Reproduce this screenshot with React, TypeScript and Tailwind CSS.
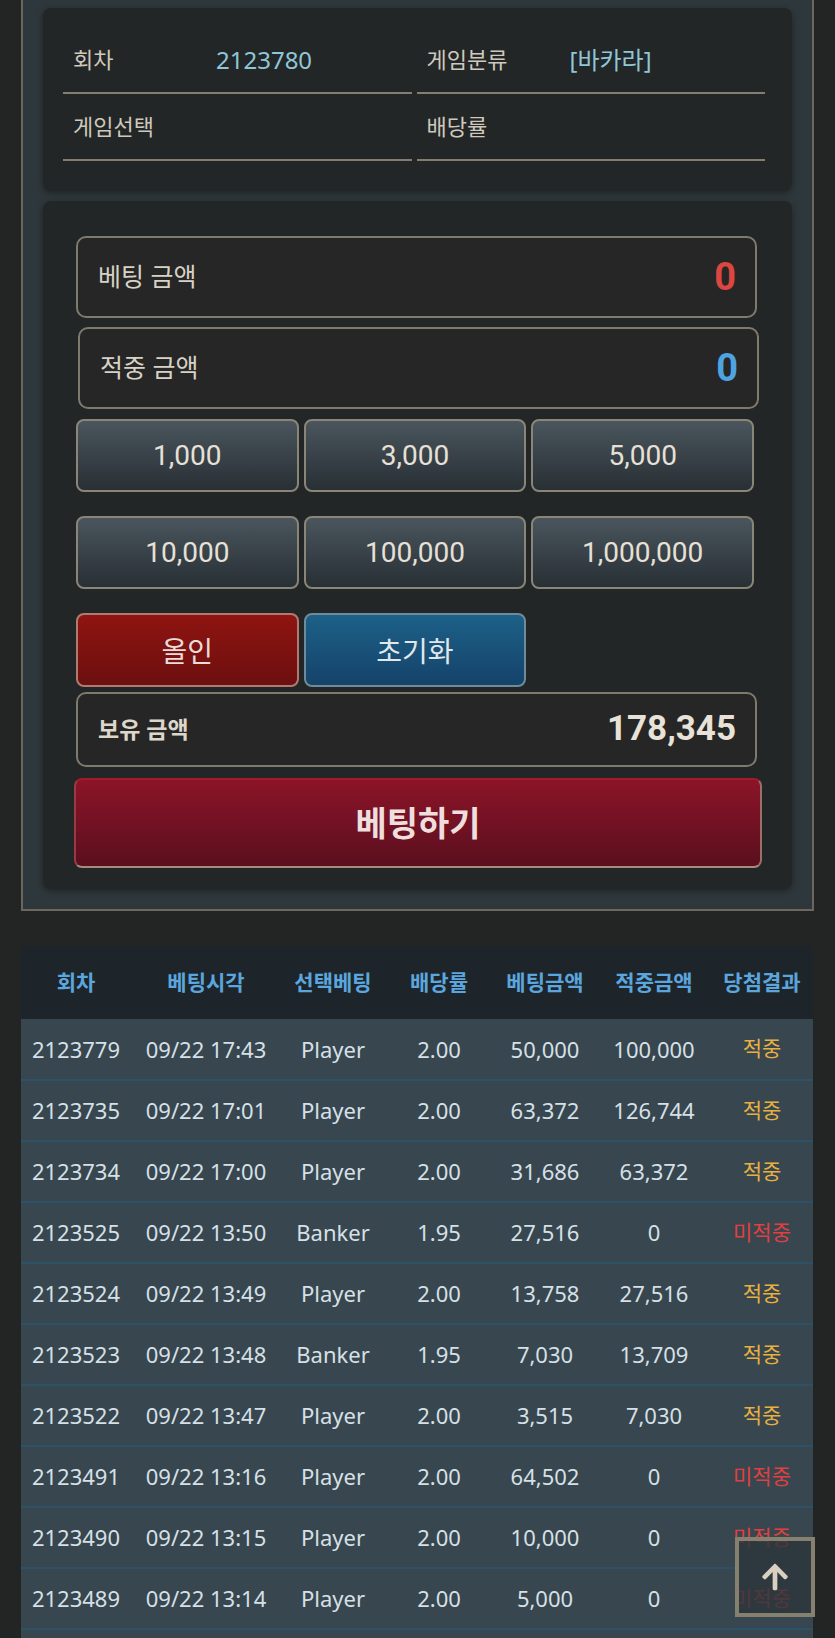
import { FaArrowUp } from "react-icons/fa";

const chips = ["1,000", "3,000", "5,000", "10,000", "100,000", "1,000,000"];

const rows = [
  ["2123779", "09/22 17:43", "Player", "2.00", "50,000", "100,000", "적중"],
  ["2123735", "09/22 17:01", "Player", "2.00", "63,372", "126,744", "적중"],
  ["2123734", "09/22 17:00", "Player", "2.00", "31,686", "63,372", "적중"],
  ["2123525", "09/22 13:50", "Banker", "1.95", "27,516", "0", "미적중"],
  ["2123524", "09/22 13:49", "Player", "2.00", "13,758", "27,516", "적중"],
  ["2123523", "09/22 13:48", "Banker", "1.95", "7,030", "13,709", "적중"],
  ["2123522", "09/22 13:47", "Player", "2.00", "3,515", "7,030", "적중"],
  ["2123491", "09/22 13:16", "Player", "2.00", "64,502", "0", "미적중"],
  ["2123490", "09/22 13:15", "Player", "2.00", "10,000", "0", "미적중"],
  ["2123489", "09/22 13:14", "Player", "2.00", "5,000", "0", "미적중"],
  ["2123488", "09/22 13:13", "Player", "2.00", "5,000", "0", "미적중"],
];

const headers = ["회차", "베팅시각", "선택베팅", "배당률", "베팅금액", "적중금액", "당첨결과"];
const colWidths = ["w-[110px]", "w-[150px]", "w-[104px]", "w-[108px]", "w-[104px]", "w-[114px]", "w-[102px]"];

function InfoCell({ label, value }: { label: string; value?: string }) {
  return (
    <div className="flex h-[67px] items-center border-b-2 border-[#857e70] pl-[10px]">
      <span className="w-[143px] text-[22px] text-[#cfc9bd]">{label}</span>
      {value && <span className="text-[24px] text-[#8fc6d8]">{value}</span>}
    </div>
  );
}

function AmountBox({ label, value, color, className = "" }: { label: string; value: string; color: string; className?: string }) {
  return (
    <div
      className={`flex h-[82px] items-center justify-between rounded-[10px] border-2 border-[#7f7a6e] bg-[#252625] pl-[20px] pr-[19px] ${className}`}
    >
      <span className="text-[25px] text-[#d8d2c6]">{label}</span>
      <span className={`font-['Roboto',sans-serif] text-[38px] font-bold ${color}`}>{value}</span>
    </div>
  );
}

export default function App() {
  return (
    <div className="min-h-screen bg-[#232525] pb-10 font-['Noto_Sans','Noto_Sans_CJK_KR',sans-serif]">
      <div className="mx-[21px] border-x-2 border-b-2 border-[#6b675c] bg-[#2e373b] px-5 pt-2 pb-5">
        {/* game info */}
        <div className="rounded-lg bg-[#222626] pt-[19px] pr-[27px] pb-[30px] pl-5 shadow-[0_2px_6px_rgba(0,0,0,0.35)]">
          <div className="grid grid-cols-2 gap-x-[5px]">
            <InfoCell label="회차" value="2123780" />
            <InfoCell label="게임분류" value="[바카라]" />
            <InfoCell label="게임선택" />
            <InfoCell label="배당률" />
          </div>
        </div>

        {/* bet slip */}
        <div className="mt-[10px] rounded-lg bg-[#222626] pt-[35px] pr-[35px] pb-[21px] pl-[33px] shadow-[0_2px_6px_rgba(0,0,0,0.35)]">
          <AmountBox label="베팅 금액" value="0" color="text-[#dc4640]" />
          <AmountBox label="적중 금액" value="0" color="text-[#4ea3e0]" className="mt-[9px] ml-[2px] -mr-[2px]" />

          <div className="mt-[10px] mr-[3px] grid grid-cols-3 gap-x-[5px] gap-y-[24px] font-['Roboto',sans-serif]">
            {chips.map((c) => (
              <button
                key={c}
                className="h-[73px] rounded-[8px] border-2 border-[#8a8577] bg-gradient-to-b from-[#4a555d] to-[#283035] text-[28px] text-[#e6e0d6]"
              >
                {c}
              </button>
            ))}
            <button className="h-[74px] rounded-[8px] border-2 border-[#b07a70] bg-gradient-to-b from-[#8f1410] to-[#6c1010] font-['Noto_Sans_CJK_KR',sans-serif] text-[28px] text-[#eadcd6]">
              올인
            </button>
            <button className="h-[74px] rounded-[8px] border-2 border-[#6d8b98] bg-gradient-to-b from-[#1d6088] to-[#15436a] font-['Noto_Sans_CJK_KR',sans-serif] text-[28px] text-[#e0e8ec]">
              초기화
            </button>
          </div>

          <div className="mt-[5px] flex h-[75px] items-center justify-between rounded-[10px] border-2 border-[#7f7a6e] bg-[#252625] pl-[20px] pr-[19px]">
            <span className="text-[23px] font-bold text-[#ddd7cb]">보유 금액</span>
            <span className="font-['Roboto',sans-serif] text-[35px] font-bold text-[#e8e2d8]">178,345</span>
          </div>

          <button className="mt-[11px] -mr-[5px] -ml-[2px] flex h-[90px] w-[calc(100%+7px)] items-center justify-center rounded-[8px] border-2 border-t-[#a31a2c] border-r-[#9a6f6a] border-b-[#a88a80] border-l-[#9a3a44] bg-gradient-to-b from-[#8c1428] to-[#5a0f1e] text-[34px] font-bold text-[#efdede]">
            베팅하기
          </button>
        </div>
      </div>

      {/* history */}
      <table className="mx-[21px] mt-[35px] w-[792px] table-fixed border-collapse text-center">
        <colgroup>
          {colWidths.map((w, i) => (
            <col key={i} className={w} />
          ))}
        </colgroup>
        <thead>
          <tr className="h-[73px] bg-[#1d252a]">
            {headers.map((h) => (
              <th key={h} className="text-[21px] font-bold text-[#5ba6de]">
                {h}
              </th>
            ))}
          </tr>
        </thead>
        <tbody>
          {rows.map((r) => (
            <tr key={r[0]} className="h-[61px] border-b-2 border-[#2d5267] bg-[#37464f] text-[22px] text-[#d6e0e6]">
              {r.slice(0, 6).map((c, i) => (
                <td key={i}>{c}</td>
              ))}
              <td className={`text-[21px] ${r[6] === "적중" ? "text-[#e8b040]" : "text-[#e04040]"}`}>{r[6]}</td>
            </tr>
          ))}
        </tbody>
      </table>

      <button className="fixed right-[20px] bottom-[21px] flex h-[80px] w-[80px] items-center justify-center border-4 border-[#86806f] bg-[#2c353b]/80">
        <FaArrowUp className="h-[30px] w-[30px] text-[#d9d0c2]" />
      </button>
    </div>
  );
}
